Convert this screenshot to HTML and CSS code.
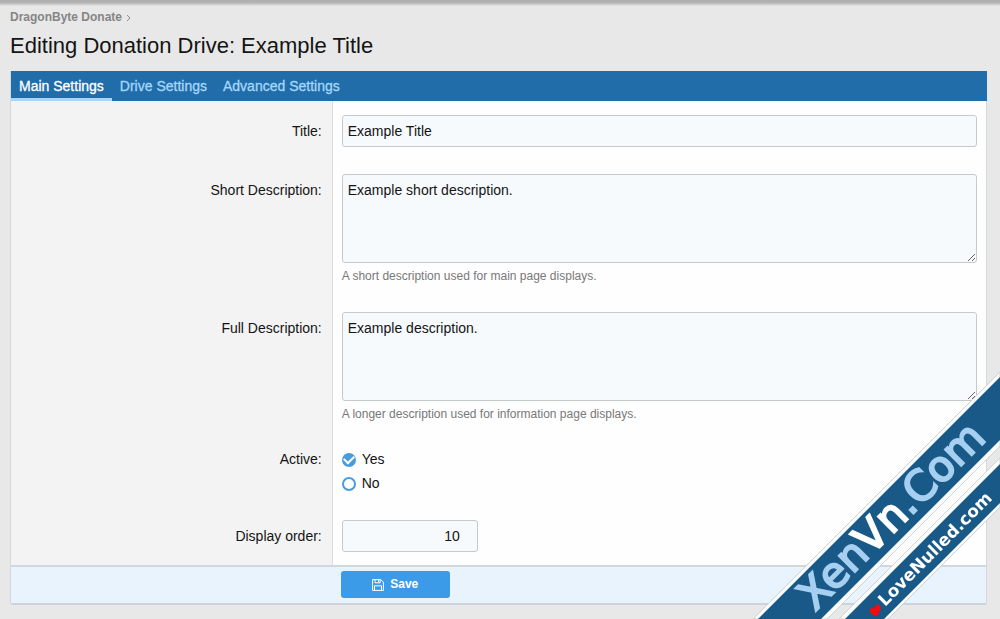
FILE: index.html
```html
<!DOCTYPE html>
<html lang="en">
<head>
<meta charset="utf-8">
<meta name="viewport" content="width=device-width, initial-scale=1">
<title>Editing Donation Drive: Example Title</title>
<link rel="stylesheet" href="styles.css">
</head>
<body>
<main class="page">
  <nav class="breadcrumb" aria-label="Breadcrumb">
    <a href="#">DragonByte Donate</a>
    <svg class="chevron" viewBox="0 0 5 8" aria-hidden="true"><path d="M1 1l3 3-3 3"/></svg>
  </nav>
  <h1 class="title">Editing Donation Drive: Example Title</h1>

  <form class="block">
    <nav class="tabs" aria-label="Settings">
      <a class="tab tab-active" href="#main">Main Settings</a>
      <a class="tab" href="#drive">Drive Settings</a>
      <a class="tab" href="#advanced">Advanced Settings</a>
    </nav>

    <div class="row">
      <div class="term"><label for="title">Title:</label></div>
      <div class="field"><input class="input" id="title" type="text" value="Example Title"></div>
    </div>
    <div class="row">
      <div class="term"><label for="short">Short Description:</label></div>
      <div class="field">
        <textarea class="input area" id="short">Example short description.</textarea>
        <p class="hint">A short description used for main page displays.</p>
      </div>
    </div>
    <div class="row">
      <div class="term"><label for="full">Full Description:</label></div>
      <div class="field">
        <textarea class="input area" id="full">Example description.</textarea>
        <p class="hint">A longer description used for information page displays.</p>
      </div>
    </div>
    <div class="row">
      <div class="term term-choice" id="active-label">Active:</div>
      <div class="field choices" role="radiogroup" aria-labelledby="active-label">
        <label class="choice"><input class="radio" type="radio" name="active" value="1" checked>Yes</label>
        <label class="choice"><input class="radio" type="radio" name="active" value="0">No</label>
      </div>
    </div>
    <div class="row">
      <div class="term"><label for="order">Display order:</label></div>
      <div class="field"><input class="input order" id="order" type="text" inputmode="numeric" value="10"></div>
    </div>

    <div class="submit">
      <button class="save" type="submit">
        <svg class="disk" viewBox="0 0 12 12" aria-hidden="true"><path d="M.6.6h8.2l2.6 2.6v8.2H.6zM3 .6v3.2h5.2V.6M6.5 1v2M2.5 11.2V6.8h7v4.4"/></svg>
        Save
      </button>
    </div>
  </form>
</main>

<svg class="ribbons" viewBox="0 0 250 250" aria-label="XenVn.Com LoveNulled.com">
  <path class="ribbon-edge" d="M3 250L250 3V77L77 250z"/>
  <path class="ribbon" d="M8 250L250 8V71L71 250z"/>
  <path class="ribbon-edge" d="M89 250L250 89V138L138 250z"/>
  <path class="ribbon" d="M95 250L250 95V134L134 250z"/>
  <text class="mark" transform="translate(65 243) rotate(-45)">Xen<tspan class="mark-bright">Vn</tspan>.Com</text>
  <path class="heart" d="M128 246C121 247 118 242 121 239C123 238 124 239 125 240C124 236 128 234 130 237C132 240 129 243 128 246z"/>
  <text class="mark-small" transform="translate(135 238) rotate(-45)">LoveNulled.com</text>
</svg>
</body>
</html>
```

FILE: styles.css
```css
* {
  box-sizing: border-box;
}

body {
  margin: 0;
  min-height: 100vh;
  background: #e8e8e8 linear-gradient(#adadad, #b6b6b6 3px, #e8e8e8 6px) no-repeat;
  color: #141414;
  font: 14px/19px "Liberation Sans", Arial, sans-serif;
}

.page {
  padding: 8px 13px 15px 10px;
}

.breadcrumb {
  display: flex;
  align-items: center;
  gap: 4px;
  font-size: 12px;
  font-weight: bold;
}

.breadcrumb a {
  color: #858585;
  text-decoration: none;
}

.chevron {
  width: 5px;
  height: 8px;
  fill: none;
  stroke: #8c8c8c;
}

.title {
  margin: 5px 0 11px;
  font-size: 22px;
  font-weight: normal;
  line-height: 28px;
}

.block {
  border: 1px solid #d3d8da;
  border-top: 0;
  border-bottom: 2px solid #cdd4d7;
  border-radius: 0 0 3px 3px;
  background: #fefefe;
}

.tabs {
  display: flex;
  height: 30px;
  margin: 0 -1px 0 0;
  background: #206da9;
}

.tab {
  padding: 6px 8px 2px;
  border-bottom: 3px solid transparent;
  color: #a5d7fb;
  text-decoration: none;
  -webkit-text-stroke: 0.3px;
}

.tab-active {
  border-bottom-color: #a5d7fb;
  color: #fff;
}

.row {
  display: grid;
  grid-template-columns: 33% 1fr;
}

.term {
  padding: 21px 10px 13px;
  border-right: 1px solid #d8dcdd;
  background: #f3f3f3;
  text-align: right;
}

.term-choice {
  padding-top: 14px;
}

.field {
  padding: 14px 9px 13px;
}

.input {
  display: block;
  width: 100%;
  height: 32px;
  padding: 5px;
  border: 1px solid #c5cbcd;
  border-radius: 3px;
  background: #f6fafd;
  color: #141414;
  font: inherit;
}

.area {
  height: 89px;
  padding-top: 6px;
  resize: vertical;
}

.order {
  width: 136px;
  padding-right: 17px;
  text-align: right;
}

.hint {
  margin: 4px 0 0;
  color: #787878;
  font-size: 12px;
  line-height: 18px;
}

.choices {
  display: grid;
  gap: 5px;
  justify-items: start;
}

.choice {
  display: flex;
  align-items: center;
  gap: 6px;
}

.radio {
  appearance: none;
  display: grid;
  place-items: center;
  width: 14px;
  height: 14px;
  margin: 0;
  border: 2px solid #4a9bdc;
  border-radius: 50%;
}

.radio:checked {
  background: #4a9bdc;
}

.radio:checked::after {
  content: "";
  width: 8px;
  height: 5px;
  margin-bottom: 2px;
  border: solid #fff;
  border-width: 0 0 2px 2px;
  transform: rotate(-45deg);
}

.submit {
  padding: 4px 0 5px 33%;
  border-top: 2px solid #cfd8db;
  background: #e8f3fd;
}

.save {
  display: flex;
  align-items: center;
  justify-content: center;
  gap: 6px;
  width: 109px;
  height: 27px;
  margin-left: 8px;
  padding: 0;
  border: 0;
  border-radius: 3px;
  background: #3c9be8;
  color: #fff;
  font: bold 12px/19px "Liberation Sans", Arial, sans-serif;
}

.disk {
  width: 12px;
  height: 12px;
  fill: none;
  stroke: #fff;
}

.ribbons {
  position: fixed;
  right: 0;
  bottom: 0;
  width: 250px;
  height: 250px;
  pointer-events: none;
}

.ribbon {
  fill: #185988;
}

.ribbon-edge {
  fill: #fbfdfc;
  stroke: #ccd2d2;
}

.mark {
  fill: #a6cff0;
  stroke: #a6cff0;
  stroke-width: 2px;
  font: 42px "DejaVu Sans", sans-serif;
}

.mark-bright {
  fill: #fff;
  stroke: #fff;
}

.mark-small {
  fill: #fff;
  font: bold 17px "DejaVu Sans", sans-serif;
}

.heart {
  fill: #f90909;
}
```
